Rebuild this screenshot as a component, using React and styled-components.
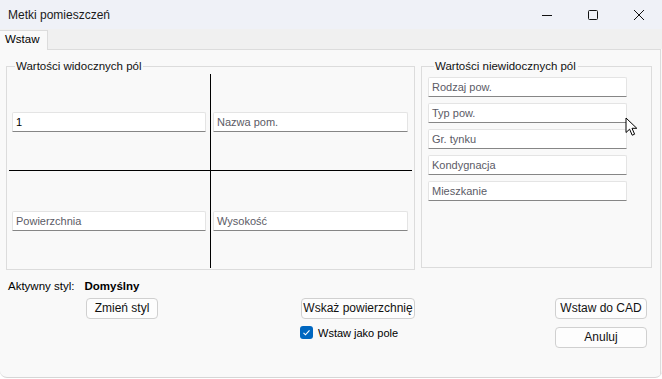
import React from "react";
import styled, { createGlobalStyle } from "styled-components";

const Global = createGlobalStyle`
  html, body { margin: 0; padding: 0; background: #ffffff; }
  body { font-family: "Liberation Sans", Arial, sans-serif; }
  * { box-sizing: border-box; }
`;

const Window = styled.div`
  width: 662px;
  height: 378px;
  display: flex;
  flex-direction: column;
  background: #f9f9f9;
  border-bottom: 1px solid #d6d6d6;
  border-radius: 0 0 7px 7px;
  overflow: hidden;
  position: relative;
  color: #000;
  font-size: 11px;
`;

const TitleBar = styled.div`
  height: 29px;
  flex: none;
  display: flex;
  align-items: center;
  background: #eff1f7;
`;

const Title = styled.div`
  flex: 1;
  padding-left: 8px;
  font-size: 12px;
  color: #1a1a1a;
`;

const Caption = styled.div`
  width: 46px;
  height: 29px;
  display: flex;
  align-items: center;
  justify-content: center;
`;

const TabStrip = styled.div`
  height: 20px;
  flex: none;
  display: flex;
  align-items: flex-end;
  background: #f0f0f0;
`;

const Tab = styled.div`
  width: 48px;
  height: 20px;
  padding: 2px 0 0 5px;
  background: #f9f9f9;
  border: 1px solid #dcdcdc;
  border-bottom: none;
  border-left: none;
  font-size: 11.5px;
  margin-bottom: -1px;
  position: relative;
  z-index: 1;
`;

const Page = styled.div`
  flex: 1;
  position: relative;
  border-top: 1px solid #dcdcdc;
  border-right: 1px solid #dcdcdc;
  margin-right: 1px;
  padding: 10px 0 0 0;
  display: flex;
  flex-direction: column;
`;

const Groups = styled.div`
  display: flex;
  gap: 6px;
  padding-left: 6px;
`;

const Group = styled.fieldset`
  margin: 0;
  width: ${(p) => p.$w}px;
  height: ${(p) => p.$h}px;
  border: 1px solid #dcdcdc;
  padding: ${(p) => p.$pad};
  min-width: 0;
`;

const Legend = styled.legend`
  padding: 0 2px 0 1px;
  margin-left: 6px;
  font-size: 11.5px;
  line-height: 13px;
  color: #111;
`;

const Cross = styled.div`
  display: grid;
  grid-template-columns: 202px 201px;
  grid-template-rows: 97px 97px;
  margin-top: 1px;
`;

const Cell = styled.div`
  display: flex;
  align-items: center;
  padding: ${(p) => (p.$right ? "0 4px 0 2px" : "0 4px 0 3px")};
  border-right: ${(p) => (p.$right ? "none" : "1px solid #000")};
  border-bottom: ${(p) => (p.$bottom ? "none" : "1px solid #000")};
  padding-top: ${(p) => (p.$bottom ? "3px" : "0")};
`;

const Field = styled.div`
  width: 100%;
  height: 20px;
  background: #fff;
  border: 1px solid #e4e4e4;
  border-bottom: 1px solid #868686;
  border-radius: 2px 2px 0 0;
  padding: 0 3px;
  display: flex;
  align-items: center;
  font-size: 11px;
  color: ${(p) => (p.$dark ? "#000" : "#5b5b66")};
`;

const FieldStack = styled.div`
  display: flex;
  flex-direction: column;
  gap: 6px;
  width: 199px;
  margin-top: 4px;
`;

const Bottom = styled.div`
  display: flex;
  padding-left: 8px;
  margin-top: 9px;
`;

const LeftCol = styled.div`
  width: 292px;
  display: flex;
  flex-direction: column;
  gap: 6px;
`;

const StyleRow = styled.div`
  display: flex;
  align-items: center;
  height: 13px;
  font-size: 11.5px;
  gap: 10px;
`;

const Bold = styled.span`
  font-weight: bold;
  font-size: 11.5px;
`;

const MidCol = styled.div`
  width: 115px;
  padding-top: 19px;
  display: flex;
  flex-direction: column;
  align-items: flex-end;
  gap: 7px;
`;

const RightCol = styled.div`
  margin-left: 140px;
  padding-top: 19px;
  display: flex;
  flex-direction: column;
  gap: 8px;
`;

const Button = styled.button`
  width: ${(p) => p.$w}px;
  height: 21px;
  margin: 0;
  margin-left: ${(p) => p.$ml || 0}px;
  padding: 0 0 2px;
  background: #fdfdfd;
  border: 1px solid #d0d0d0;
  border-radius: 4px;
  font-family: "Liberation Sans", Arial, sans-serif;
  font-size: 12px;
  color: #111;
`;

const CheckRow = styled.label`
  align-self: flex-start;
  display: flex;
  align-items: center;
  gap: 5px;
  font-size: 11px;
`;

const Box = styled.span`
  width: 13px;
  height: 13px;
  border-radius: 3px;
  background: #0067c0;
  display: flex;
  align-items: center;
  justify-content: center;
`;

const Cursor = styled.svg`
  position: absolute;
  left: 625px;
  top: 67px;
`;

export default function App() {
  return (
    <>
      <Global />
      <Window>
        <TitleBar>
          <Title>Metki pomieszczeń</Title>
          <Caption>
            <svg width="12" height="12" viewBox="0 0 12 12">
              <path d="M1 6.5h10" stroke="#111" strokeWidth="1" />
            </svg>
          </Caption>
          <Caption>
            <svg width="12" height="12" viewBox="0 0 12 12">
              <rect x="1.5" y="1.5" width="9" height="9" rx="1" fill="none" stroke="#111" strokeWidth="1" />
            </svg>
          </Caption>
          <Caption>
            <svg width="12" height="12" viewBox="0 0 12 12">
              <path d="M1 1l10 10M11 1L1 11" stroke="#111" strokeWidth="1" />
            </svg>
          </Caption>
        </TitleBar>
        <TabStrip>
          <Tab>Wstaw</Tab>
        </TabStrip>
        <Page>
          <Groups>
            <Group $w={409} $h={210} $pad="0 1px 0 2px">
              <Legend>Wartości widocznych pól</Legend>
              <Cross>
                <Cell>
                  <Field $dark>1</Field>
                </Cell>
                <Cell $right>
                  <Field>Nazwa pom.</Field>
                </Cell>
                <Cell $bottom>
                  <Field>Powierzchnia</Field>
                </Cell>
                <Cell $right $bottom>
                  <Field>Wysokość</Field>
                </Cell>
              </Cross>
            </Group>
            <Group $w={231} $h={208} $pad="0 0 0 6px">
              <Legend>Wartości niewidocznych pól</Legend>
              <FieldStack>
                <Field>Rodzaj pow.</Field>
                <Field>Typ pow.</Field>
                <Field>Gr. tynku</Field>
                <Field>Kondygnacja</Field>
                <Field>Mieszkanie</Field>
              </FieldStack>
            </Group>
          </Groups>
          <Bottom>
            <LeftCol>
              <StyleRow>
                <span>Aktywny styl:</span>
                <Bold>Domyślny</Bold>
              </StyleRow>
              <Button $w={72} $ml={78}>Zmień styl</Button>
            </LeftCol>
            <MidCol>
              <Button $w={114}>Wskaż powierzchnię</Button>
              <CheckRow>
                <Box>
                  <svg width="9" height="9" viewBox="0 0 9 9">
                    <path d="M1.5 4.8l2 2 4-4.5" fill="none" stroke="#fff" strokeWidth="1.1" />
                  </svg>
                </Box>
                Wstaw jako pole
              </CheckRow>
            </MidCol>
            <RightCol>
              <Button $w={92}>Wstaw do CAD</Button>
              <Button $w={92}>Anuluj</Button>
            </RightCol>
          </Bottom>
          <Cursor width="14" height="20" viewBox="0 0 14 20">
            <path
              d="M1 1 L1 15.5 L4.6 12.2 L7.2 18.2 L9.6 17.2 L7 11.3 L11.8 11.3 Z"
              fill="#fff"
              stroke="#000"
              strokeWidth="1"
              strokeLinejoin="round"
            />
          </Cursor>
        </Page>
      </Window>
    </>
  );
}
